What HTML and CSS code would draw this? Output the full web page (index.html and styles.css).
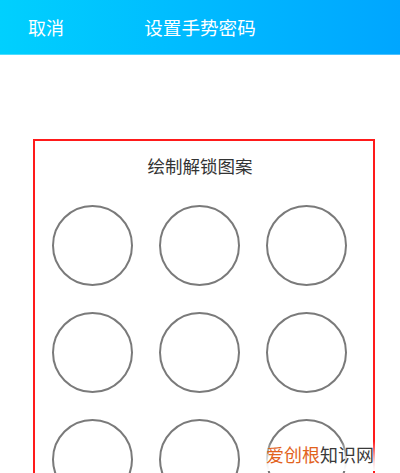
FILE: index.html
```html
<!DOCTYPE html>
<html lang="zh-CN">
<head>
<meta charset="utf-8">
<title>设置手势密码</title>
<link rel="stylesheet" href="styles.css">
</head>
<body>
<header class="topbar">
  <span class="cancel">取消</span>
  <span class="title">设置手势密码</span>
</header>
<main class="page">
  <section class="panel">
    <h2 class="panel-title">绘制解锁图案</h2>
    <div class="grid">
      <div class="dot"></div><div class="dot"></div><div class="dot"></div>
      <div class="dot"></div><div class="dot"></div><div class="dot"></div>
      <div class="dot"></div><div class="dot"></div><div class="dot"></div>
    </div>
  </section>
</main>
<div class="watermark"><span class="wm-a">爱创根</span><span class="wm-b">知识网</span></div>
</body>
</html>
```
FILE: styles.css
```css
html, body {
  margin: 0;
  padding: 0;
  width: 400px;
  height: 473px;
  overflow: hidden;
  background: #fff;
  font-family: "Noto Sans CJK SC", "Noto Sans", sans-serif;
}
.topbar {
  position: relative;
  height: 54px;
  border-bottom: 1px solid rgba(255, 255, 255, 0.3);
  background: linear-gradient(90deg, #00d0fe 0%, #00bcff 45%, #00a6ff 100%);
  color: #fff;
  display: flex;
  align-items: center;
  font-size: 18px;
}
.cancel {
  margin-left: 28px;
  line-height: 1;
}
.title {
  position: absolute;
  left: 0;
  right: 0;
  text-align: center;
  font-size: 18.6px;
  line-height: 1;
  pointer-events: none;
}
.page {
  padding-top: 84px;
}
.panel {
  margin-left: 33px;
  width: 342px;
  height: 334px;
  overflow: hidden;
  box-sizing: border-box;
  border: 2px solid #ff1a1a;
  border-bottom: none;
}
.panel-title {
  margin: 13px 0 0 0;
  text-align: center;
  font-weight: normal;
  font-size: 17.5px;
  line-height: 24px;
  color: #333;
  padding-right: 8px;
}
.grid {
  margin: 27px 0 0 17px;
  display: grid;
  grid-template-columns: repeat(3, 81px);
  column-gap: 26px;
  row-gap: 26px;
}
.dot {
  width: 81px;
  height: 81px;
  box-sizing: border-box;
  border: 2px solid #7a7a7a;
  border-radius: 50%;
}
.watermark {
  position: absolute;
  left: 262px;
  top: 441px;
  padding: 2px 4px 6px 4px;
  font-size: 18px;
  line-height: 22px;
  background: linear-gradient(180deg, rgba(255,255,255,0) 0%, rgba(255,255,255,0.85) 70%, #fff 100%);
  white-space: nowrap;
}
.wm-a { color: #e2621c; }
.wm-b { color: #3a3a3a; }
```
